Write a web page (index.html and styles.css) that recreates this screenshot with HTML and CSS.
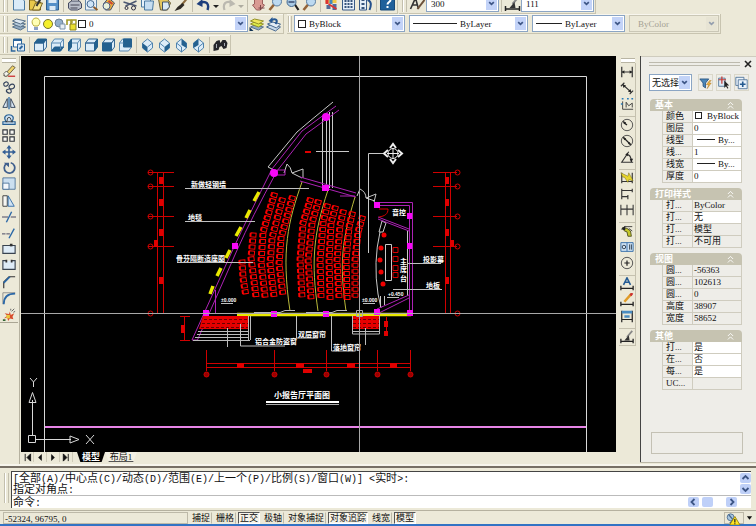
FILE: index.html
```html
<!DOCTYPE html>
<html lang="zh-CN">
<head>
<meta charset="utf-8">
<title>小报告厅平面图</title>
<link rel="stylesheet" href="styles.css">
</head>
<body>
<svg class="sprite" aria-hidden="true">
  <symbol id="chev" viewBox="0 0 10 14"><path d="M2.5 5.5L5 8l2.5-2.5" fill="none" stroke="#3d5585" stroke-width="1.8"/></symbol>
  <symbol id="new" viewBox="0 0 16 16"><path d="M3 2h8l3 3v9H3z" fill="#d9ebf8" stroke="#4b7ba3"/></symbol>
  <symbol id="open" viewBox="0 0 16 16"><path d="M2 4h5l1 2h5v8H2z" fill="#e8c84a" stroke="#7a6420"/><path d="M5 14l3-7h7l-3 7z" fill="#f6e27f" stroke="#7a6420"/><path d="M9 10l4-7" stroke="#333" stroke-width="2"/></symbol>
  <symbol id="save" viewBox="0 0 16 16"><path d="M2 2h12v12H2z" fill="#5590c8" stroke="#2c5c8f"/><path d="M4 2h8v5H4zM5 10h6v4H5z" fill="#dceaf6"/></symbol>
  <symbol id="print" viewBox="0 0 16 16"><path d="M5 6V1h7v5" fill="#fff" stroke="#555"/><path d="M2 7l3-2h8l2 3v4l-4 2H4l-2-2z" fill="#b9bec9" stroke="#444a60"/><path d="M4 9h9M4 12h7" stroke="#445"/></symbol>
  <symbol id="preview" viewBox="0 0 16 16"><path d="M2 1h11v13H2z" fill="#e7f0f8" stroke="#6488a8"/><circle cx="7" cy="8" r="3.5" fill="#cfe5f8" stroke="#466b91"/><path d="M10 11l4 3" stroke="#8e5a28" stroke-width="2"/></symbol>
  <symbol id="publish" viewBox="0 0 16 16"><path d="M3 8l5-6 6 5-4 7H5z" fill="#edb23b" stroke="#45506b"/><circle cx="6" cy="10" r="3.5" fill="#e9efd9" stroke="#485981"/><path d="M8 5l4 3" stroke="#c43" stroke-width="2"/></symbol>
  <symbol id="cut" viewBox="0 0 16 16"><path d="M1 6l13 4M14 5L3 10" stroke="#4c5872" stroke-width="1.4"/><circle cx="11" cy="12" r="2" fill="none" stroke="#334"/><circle cx="4" cy="12" r="1.5" fill="none" stroke="#334"/></symbol>
  <symbol id="copy" viewBox="0 0 16 16"><path d="M2 2h9v9H2z" fill="#e7f2fa" stroke="#4b7ba3"/><path d="M5 5h9l-1 9H5z" fill="#c6def1" stroke="#4b7ba3"/></symbol>
  <symbol id="paste" viewBox="0 0 16 16"><path d="M2 3l7-2 5 6-3 7H4z" fill="#e3c65f" stroke="#6d6037"/><path d="M6 6h6l1 5-3 3H6z" fill="#d9e8f4" stroke="#456"/></symbol>
  <symbol id="brush" viewBox="0 0 16 16"><path d="M14 2L8 9" stroke="#8a6a3c" stroke-width="2"/><path d="M9 7l2 2-4 4-6 2 3-4z" fill="#2e2a24"/></symbol>
  <symbol id="undo" viewBox="0 0 16 16"><path d="M12 14c2-6-1-10-8-7" fill="none" stroke="#1d3e7c" stroke-width="2.4"/><path d="M1 8l6-5v8z" fill="#1d3e7c"/></symbol>
  <symbol id="redo" viewBox="0 0 16 16"><path d="M4 14C2 8 5 4 12 7" fill="none" stroke="#bbb9b0" stroke-width="2.2"/><path d="M15 8L9 3v8z" fill="#bbb9b0"/></symbol>
  <symbol id="tri" viewBox="0 0 8 16"><path d="M1 9h6l-3 3z" fill="#222"/></symbol>
  <symbol id="hand" viewBox="0 0 16 16"><path d="M4 2h8v6l2 1-4 5H6L2 9l2-1z" fill="#d99a93" stroke="#9a5f5c"/><path d="M10 9v5M8 12h6" stroke="#7b4648"/></symbol>
  <symbol id="lens" viewBox="0 0 16 16"><path d="M7 8l-5 6" stroke="#946338" stroke-width="2.6"/><circle cx="9.5" cy="5.5" r="4.5" fill="#bcd9f0" stroke="#597c9f"/></symbol>
  <symbol id="lens2" viewBox="0 0 16 16"><path d="M10 8l4 6" stroke="#222" stroke-width="2.2"/><circle cx="7" cy="6" r="4.5" fill="#a9cbe6" stroke="#456a90"/><path d="M4 6h6" stroke="#346" stroke-width="1.4"/></symbol>
  <symbol id="props" viewBox="0 0 16 16"><path d="M2 1h11v6H2z" fill="#f3c947"/><path d="M2 4h3v4H2z" fill="#d33"/><path d="M6 3h3v5H6z" fill="#48b"/><path d="M3 9h4v4H3zM9 8h4v6H9z" fill="#536a98"/><path d="M5 8l8 5" stroke="#d33" stroke-width="1.6"/></symbol>
  <symbol id="gridic" viewBox="0 0 16 16"><path d="M2 1h12v13H2z" fill="#e4eef8" stroke="#385a86"/><path d="M4 4h2v2H4zM7 4h2v2H7zM10 4h2v2h-2zM4 7h2v2H4zM7 7h2v2H7zM10 7h2v2h-2zM4 10h2v2H4zM7 10h2v2H7zM10 10h2v2h-2z" fill="#36547c"/></symbol>
  <symbol id="palette" viewBox="0 0 16 16"><path d="M2 1h7v13H2z" fill="#e4eef8" stroke="#385a86"/><path d="M4 3h3v2H4zM4 7h3v2H4zM4 11h3v2H4z" fill="#36547c"/><path d="M10 4c4 1 4 5 2 10" stroke="#24508c" fill="none" stroke-width="2"/></symbol>
  <symbol id="helpic" viewBox="0 0 16 16"><path d="M1 0h14v14H1z" fill="#20619b" stroke="#174b7b"/><path d="M5 4c0-4 6-3 6 0 0 2-3 2-3 4.500M8 10v2" fill="none" stroke="#fff" stroke-width="2"/></symbol>
  <symbol id="style" viewBox="0 0 16 16"><path d="M1 13L6 2l3 11M3 9h5" stroke="#333" stroke-width="1.6" fill="none"/><path d="M15 4L8 13" stroke="#6c513a" stroke-width="2"/></symbol>
  <symbol id="layers" viewBox="0 0 16 16"><path d="M2 11l4-2 9 2-5 3z" fill="#8fa9c1" stroke="#587189"/><path d="M2 8l4-2 9 2-5 3z" fill="#b5cadb" stroke="#587189"/><path d="M2 5l4-2 9 2-5 3z" fill="#dde8f1" stroke="#587189"/></symbol>
  <symbol id="layery" viewBox="0 0 16 16"><path d="M2 11l4-2 9 2-5 3z" fill="#8fa9c1" stroke="#587189"/><path d="M2 8l4-2 9 2-5 3z" fill="#ddeb49" stroke="#93902a"/><path d="M2 5l4-2 9 2-5 3z" fill="#f0e75b" stroke="#93902a"/><path d="M1 15v-4l4 4z" fill="#135"/></symbol>
  <symbol id="layerp" viewBox="0 0 16 16"><path d="M1 11l4-2 10 2-5 4z" fill="#c7d9ea" stroke="#48688e"/><path d="M2 8l5-2 8 2-4 4z" fill="#e3edf6" stroke="#48688e"/><path d="M10 8c3-4 0-6-4-4" fill="none" stroke="#275894" stroke-width="2"/><path d="M3 5l4-4v6z" fill="#275894"/></symbol>
  <symbol id="bulb" viewBox="0 0 12 14"><path d="M4 9C0 5 3 1 6 1s6 4 2 8z" fill="#ffffb5" stroke="#b9ad3c"/><path d="M4 10h4v3H4z" fill="#8ba0c4"/></symbol>
  <symbol id="sun" viewBox="0 0 12 14"><circle cx="6" cy="7" r="4.500" fill="#f5ef2c" stroke="#777331"/></symbol>
  <symbol id="vp" viewBox="0 0 12 14"><circle cx="5" cy="6" r="4" fill="#93aeca" stroke="#6b8093"/><path d="M6 7h5v5H6z" fill="#e8eef4" stroke="#7d94ab"/></symbol>
  <symbol id="lock" viewBox="0 0 12 14"><path d="M1 8V3h4v4" fill="none" stroke="#a29a26" stroke-width="1.600"/><path d="M4 7h6v6H4z" fill="#eadf32" stroke="#8d8322"/><path d="M6 6V3h4v4" fill="none" stroke="#a29a26" stroke-width="1.400"/></symbol>
  <symbol id="cube-t" viewBox="0 0 16 16"><path d="M2 6h9v8H2zM11 6l3-4v8l-3 4z" fill="#dcecf8" stroke="#3a6b96"/><path d="M2 6l3-4h9l-3 4z" fill="#24618f" stroke="#24618f"/></symbol>
  <symbol id="cube-b" viewBox="0 0 16 16"><path d="M2 6l3-4h9v8l-3 4H2z" fill="#dcecf8" stroke="#5b8bb3"/><path d="M2 14l3-4h9l-3 4z" fill="#24618f" stroke="#24618f"/><path d="M2 6h9l3-4M11 6v6" fill="none" stroke="#5b8bb3"/></symbol>
  <symbol id="cube-l" viewBox="0 0 16 16"><path d="M2 6l3-4h9v8l-3 4H2zM2 6h9v8M11 6l3-4" fill="#dcecf8" stroke="#5b8bb3"/><path d="M2 6l3-4v8l-3 4z" fill="#24618f" stroke="#24618f"/></symbol>
  <symbol id="cube-r" viewBox="0 0 16 16"><path d="M2 6l3-4h9l-3 4zM2 6h9v8H2z" fill="#dcecf8" stroke="#3a6b96"/><path d="M11 6l3-4v8l-3 4z" fill="#24618f" stroke="#24618f"/></symbol>
  <symbol id="cube-f" viewBox="0 0 16 16"><path d="M2 6l3-4h9l-3 4zM11 6l3-4v8l-3 4z" fill="#dcecf8" stroke="#3a6b96"/><path d="M2 6h9v8H2z" fill="#24618f" stroke="#24618f"/></symbol>
  <symbol id="cube-k" viewBox="0 0 16 16"><path d="M2 6l3-4h9v8l-3 4H2z" fill="#dcecf8" stroke="#5b8bb3"/><path d="M6 2h8v8H6z" fill="#24618f" stroke="#24618f"/><path d="M2 6h4" stroke="#5b8bb3"/></symbol>
  <symbol id="iso-1" viewBox="0 0 16 16"><path d="M8 2l5 4v5l-5 4-5-4V6z" fill="#dcecf8" stroke="#4f83ae"/><path d="M3 6l5 4v5l-5-4z" fill="#24618f"/><path d="M8 10l5-4" stroke="#4f83ae"/></symbol>
  <symbol id="iso-2" viewBox="0 0 16 16"><path d="M8 2l5 4v5l-5 4-5-4V6z" fill="#dcecf8" stroke="#4f83ae"/><path d="M13 6l-5 4v5l5-4z" fill="#24618f"/><path d="M8 10L3 6" stroke="#4f83ae"/></symbol>
  <symbol id="iso-3" viewBox="0 0 16 16"><path d="M8 2l5 4v5l-5 4-5-4V6z" fill="#dcecf8" stroke="#4f83ae"/><path d="M8 2l5 4v5L8 8z" fill="#24618f"/><path d="M3 6l5 4v5" fill="none" stroke="#4f83ae"/></symbol>
  <symbol id="iso-4" viewBox="0 0 16 16"><path d="M8 2l5 4v5l-5 4-5-4V6z" fill="#dcecf8" stroke="#4f83ae"/><path d="M8 2L3 6v5l5-3z" fill="#24618f"/><path d="M13 6l-5 4v5" fill="none" stroke="#4f83ae"/></symbol>
  <symbol id="views" viewBox="0 0 16 16"><path d="M3 2h8v8H3z" fill="#fff" stroke="#2d669c"/><path d="M3 2h8v2H3z" fill="#2d669c"/><path d="M1 9v5h4" fill="none" stroke="#2d669c" stroke-width="1.500"/><path d="M7 7h7v7H7z" fill="#dbe9f5" stroke="#2d669c"/><path d="M9 12l3-3" stroke="#2d669c" stroke-width="2"/></symbol>
  <symbol id="camera" viewBox="0 0 16 16"><path d="M1 8l3-4 3-1 1 3 2-3 3 0 2 3-1 5-3 1-2-3-2 1-1 3-5 1z" fill="#25262b"/><path d="M4 7v4M12 6v3" stroke="#a7acb5"/></symbol>
  <symbol id="erase" viewBox="0 0 16 16"><path d="M2 13L12 2l3 2-9 10z" fill="#f1d56c" stroke="#5f523a"/><path d="M2 11l3-3 3 3-3 3H3z" fill="#f2f2ea" stroke="#555"/><path d="M7 14h8" stroke="#c33" stroke-width="1.500"/></symbol>
  <symbol id="copyo" viewBox="0 0 16 16"><path d="M3 3c4-3 6 3 2 4-3 1-4-3-2-4zM9 6c4-4 8 2 3 4-4 1-5-2-3-4zM6 11c4-3 7 4 2 4-3-1-4-3-2-4z" fill="none" stroke="#33425c" stroke-width="1.300"/></symbol>
  <symbol id="mirror" viewBox="0 0 16 16"><path d="M1 13L6 3v10zM15 13L10 3v10z" fill="#dce9f5" stroke="#273850"/><path d="M8 1v14" stroke="#2b68a7" stroke-width="1.500"/></symbol>
  <symbol id="offset" viewBox="0 0 16 16"><path d="M1 13h14v-3h-4c4-5 1-8-3-8S1 5 5 10H1z" fill="#cfe2f2" stroke="#265f93" stroke-width="1.300"/><path d="M4 10h8c-3-1-1-5-4-5s-1 4-3 5" fill="none" stroke="#333"/></symbol>
  <symbol id="array" viewBox="0 0 16 16"><path d="M1 1h5v5H1zM9 1h5v5H9zM1 9h5v5H1zM9 9h5v5H9z" fill="#f7f7f2" stroke="#30353c" stroke-width="1.300"/></symbol>
  <symbol id="move" viewBox="0 0 16 16"><path d="M8 2v12M2 8h12" stroke="#335f95" stroke-width="1.800"/><path d="M8 0l3 4H5zM8 16l3-4H5zM0 8l4-3v6zM16 8l-4-3v6z" fill="#335f95"/></symbol>
  <symbol id="rotate" viewBox="0 0 16 16"><path d="M5 3a6 6 0 1 0 5-1" fill="none" stroke="#3f5f8d" stroke-width="2"/><path d="M2 2h6v5z" fill="#3f5f8d"/></symbol>
  <symbol id="scale" viewBox="0 0 16 16"><path d="M1 1h14v13H1z" fill="#cbdff0" stroke="#4a7197"/><path d="M1 7h7v7H1z" fill="#f4f8fc" stroke="#4a7197"/></symbol>
  <symbol id="stretch" viewBox="0 0 16 16"><path d="M1 2h5v12H1z" fill="#f6f6f2" stroke="#333"/><path d="M7 2l7 12H7z" fill="#cfe2f2" stroke="#2b68a7"/></symbol>
  <symbol id="trim" viewBox="0 0 16 16"><path d="M0 8h7M10 8h6" stroke="#335"/><path d="M11 2L5 14" stroke="#2b68a7" stroke-width="1.600"/></symbol>
  <symbol id="extend" viewBox="0 0 16 16"><path d="M0 9h10" stroke="#335" stroke-dasharray="4 1"/><path d="M14 3L8 14" stroke="#2b68a7" stroke-width="1.600"/></symbol>
  <symbol id="brk" viewBox="0 0 16 16"><path d="M1 4h14v9H1z" fill="#dfecf7" stroke="#39434f" stroke-width="1.300"/><path d="M9 2h3v3H9z" fill="#333"/></symbol>
  <symbol id="brk2" viewBox="0 0 16 16"><path d="M5 3H1v10h14V3h-4" fill="#dfecf7" stroke="#39434f" stroke-width="1.300"/><path d="M4 2h2v3H4zM10 2h2v3h-2z" fill="#333"/></symbol>
  <symbol id="chamfer" viewBox="0 0 16 16"><path d="M2 15V8l6-6h7" fill="none" stroke="#333" stroke-width="1.300"/><path d="M2 9l7-7" stroke="#2b68a7" stroke-width="2"/></symbol>
  <symbol id="fillet" viewBox="0 0 16 16"><path d="M1 15V2h14" fill="none" stroke="#888"/><path d="M2 15C2 7 7 3 15 3" fill="none" stroke="#2b68a7" stroke-width="2"/></symbol>
  <symbol id="explode" viewBox="0 0 16 16"><path d="M2 13l4-3-3-3 5 1 1-3 1 4 4-2-2 4 1 3-4-1-2 3-1-4z" fill="#d74c2b"/><path d="M5 9h4v4H5z" fill="#e9c83c"/><path d="M11 5l3-3M13 6l2-1M10 4V2" stroke="#555"/><path d="M1 14h3v2H1z" fill="#363"/></symbol>
  <symbol id="d-lin" viewBox="0 0 16 16"><path d="M2 2v12M14 2v12M2 8h12" stroke="#333" stroke-width="1.400"/><path d="M2 8l3-2v4zM14 8l-3-2v4z" fill="#222"/></symbol>
  <symbol id="d-ali" viewBox="0 0 16 16"><path d="M1 6l4-4M11 15l4-4M3 4l10 9" stroke="#333" stroke-width="1.300"/><path d="M3 4l4 1-3 3zM13 13l-4-1 3-3z" fill="#222"/></symbol>
  <symbol id="d-ord" viewBox="0 0 16 16"><path d="M3 5v9M3 14h12M7 12V6l3 4 4-3v5" stroke="#333" fill="none"/><path d="M2 2h2M8 2h2M13 2h2M1 8h2" stroke="#297cba" stroke-width="1.500"/></symbol>
  <symbol id="d-rad" viewBox="0 0 16 16"><circle cx="8" cy="8" r="6.500" fill="none" stroke="#444"/><path d="M8 8L4 5" stroke="#222" stroke-width="1.500"/><path d="M3 3l4 2-2 2z" fill="#222"/></symbol>
  <symbol id="d-dia" viewBox="0 0 16 16"><circle cx="8" cy="8" r="6.500" fill="none" stroke="#444"/><path d="M4 4l8 8" stroke="#222" stroke-width="1.500"/><path d="M3 3l4 2-2 2zM13 13l-4-2 2-2z" fill="#222"/></symbol>
  <symbol id="d-ang" viewBox="0 0 16 16"><path d="M15 14H2L10 2M7 5c4 0 6 4 6 9" fill="none" stroke="#333" stroke-width="1.300"/><path d="M13 14l-2-4h4zM6 5l3-2v4z" fill="#222"/></symbol>
  <symbol id="d-qk" viewBox="0 0 16 16"><path d="M2 2v12M14 2v12M2 12h12" stroke="#333" stroke-width="1.300"/><path d="M1 2l8 4 1-4 5 9-5-1-1 3-4-6-2 0z" fill="#e7d52c" stroke="#5f5714" stroke-width=".500"/></symbol>
  <symbol id="d-base" viewBox="0 0 16 16"><path d="M2 2v12M14 2v4M9 9v5M2 4h12M2 11h7" stroke="#333" stroke-width="1.300"/></symbol>
  <symbol id="d-cont" viewBox="0 0 16 16"><path d="M1 2v12M8 2v12M15 2v12M1 7h14" stroke="#333" stroke-width="1.200"/></symbol>
  <symbol id="d-lead" viewBox="0 0 16 16"><path d="M3 4l5 1 4 3 1 6-4 0-1-5-3-1z" fill="#c3c729" stroke="#4b4c1f"/><path d="M1 6l5-4v5z" fill="#222"/><path d="M5 3h9M10 5l4 3" stroke="#333"/></symbol>
  <symbol id="d-tol" viewBox="0 0 16 16"><path d="M1 3h14v10H1z" fill="#cfe2f2" stroke="#2b68a7"/><path d="M8 3v10" stroke="#2b68a7"/><circle cx="4.500" cy="8" r="2" fill="none" stroke="#234"/><path d="M11 5v6M13 5v6" stroke="#234"/></symbol>
  <symbol id="d-cen" viewBox="0 0 16 16"><circle cx="8" cy="8" r="6.500" fill="none" stroke="#444"/><path d="M8 5v6M5 8h6" stroke="#222" stroke-width="1.400"/></symbol>
  <symbol id="d-txt" viewBox="0 0 16 16"><path d="M4 9l4-8 4 8M6 6h4" fill="none" stroke="#255c94" stroke-width="1.800"/><path d="M1 10v5M15 10v5M1 13h14" stroke="#222" stroke-width="1.500"/></symbol>
  <symbol id="d-ed" viewBox="0 0 16 16"><path d="M13 1L5 10" stroke="#e09c28" stroke-width="2.800"/><path d="M14 0l-2 3" stroke="#c33" stroke-width="2.800"/><path d="M1 10v5M15 10v5M1 13h14" stroke="#222" stroke-width="1.500"/></symbol>
  <symbol id="d-upd" viewBox="0 0 16 16"><path d="M2 2v13M14 2v13M2 12h12" stroke="#222" stroke-width="1.400"/><path d="M2 2h12v3H2zM5 7h6v3H5z" fill="#4a8cc1"/></symbol>
  <symbol id="d-sty" viewBox="0 0 16 16"><path d="M14 1L8 8" stroke="#888" stroke-width="2"/><path d="M10 6l-5 6h6z" fill="#333"/><path d="M1 10v5M15 10v5M1 13h14" stroke="#222" stroke-width="1.500"/></symbol>
  <symbol id="filter" viewBox="0 0 16 16"><path d="M1 3h11L8 8v6l-3-2V8z" fill="#4a86b9" stroke="#254f7c"/><path d="M13 5l-4 5h3l-2 5 5-7h-3l3-3z" fill="#f0b23c" stroke="#9b6614" stroke-width=".500"/></symbol>
  <symbol id="pick" viewBox="0 0 16 16"><path d="M2 2h8v10H2z" fill="#dce9f5" stroke="#456b92"/><path d="M6 0v9M2 4h9" stroke="#c43a34" stroke-width="1.500"/><path d="M9 5v9l2-2 2 3 1-1-2-3h3z" fill="#222"/></symbol>
  <symbol id="plus" viewBox="0 0 16 16"><path d="M1 1h10v10H1z" fill="#eaf2fa" stroke="#456b92"/><path d="M4 4h11v11H4z" fill="#eaf2fa" stroke="#456b92"/><path d="M9.500 6v7M6 9.500h7" stroke="#245a90" stroke-width="2"/></symbol>
  <symbol id="fold" viewBox="0 0 8 8"><path d="M1 4l3-3 3 3M1 8l3-3 3 3" fill="none" stroke="#fff"/></symbol>
</svg>

<div class="app">
  <header class="bars">
    <div class="bar bar-cut">
      <div class="tools">
        <i class="grip"></i>
        <button aria-label="新建"><svg><use href="#new"/></svg></button><button aria-label="打开"><svg><use href="#open"/></svg></button><button aria-label="保存"><svg><use href="#save"/></svg></button>
        <i class="sep"></i>
        <button aria-label="打印"><svg><use href="#print"/></svg></button><button aria-label="预览"><svg><use href="#preview"/></svg></button><button aria-label="发布"><svg><use href="#publish"/></svg></button>
        <i class="sep"></i>
        <button aria-label="剪切"><svg><use href="#cut"/></svg></button><button aria-label="复制"><svg><use href="#copy"/></svg></button><button aria-label="粘贴"><svg><use href="#paste"/></svg></button><button aria-label="特性匹配"><svg><use href="#brush"/></svg></button>
        <i class="sep"></i>
        <button aria-label="放弃"><svg><use href="#undo"/></svg></button><button class="narrow" aria-label="放弃列表"><svg><use href="#tri"/></svg></button><button aria-label="重做"><svg><use href="#redo"/></svg></button><button class="narrow faint" aria-label="重做列表"><svg><use href="#tri"/></svg></button>
        <i class="sep"></i>
        <button aria-label="平移"><svg><use href="#hand"/></svg></button><button aria-label="实时缩放"><svg><use href="#lens"/></svg></button><button aria-label="窗口缩放"><svg><use href="#lens2"/></svg></button><button aria-label="上一个缩放"><svg><use href="#lens"/></svg></button>
        <i class="sep"></i>
        <button aria-label="特性"><svg><use href="#props"/></svg></button><button aria-label="设计中心"><svg><use href="#gridic"/></svg></button><button aria-label="工具选项板"><svg><use href="#palette"/></svg></button>
        <i class="sep"></i>
        <button aria-label="帮助"><svg><use href="#helpic"/></svg></button>
      </div>
      <div class="tools">
        <i class="grip"></i>
        <button aria-label="文字样式"><svg><use href="#style"/></svg></button>
        <span class="combo w-text"><select aria-label="文字样式名"><option>300</option></select><svg class="arrow"><use href="#chev"/></svg></span>
        <i class="sep"></i>
        <button aria-label="标注样式"><svg><use href="#d-sty"/></svg></button>
        <span class="combo w-text"><select aria-label="标注样式名"><option>111</option></select><svg class="arrow"><use href="#chev"/></svg></span>
      </div>
    </div>
    <div class="bar">
      <div class="tools">
        <i class="grip"></i>
        <button aria-label="图层特性"><svg><use href="#layers"/></svg></button>
        <span class="combo w-layer"><svg class="mini"><use href="#bulb"/></svg><svg class="mini"><use href="#sun"/></svg><svg class="mini"><use href="#vp"/></svg><svg class="mini"><use href="#lock"/></svg><i class="swatch"></i><select aria-label="图层"><option>0</option></select><svg class="arrow"><use href="#chev"/></svg></span>
        <button aria-label="置为当前图层"><svg><use href="#layery"/></svg></button><button aria-label="上一个图层"><svg><use href="#layerp"/></svg></button>
      </div>
      <div class="tools roomy">
        <i class="grip"></i>
        <span class="combo w-color"><i class="swatch"></i><select aria-label="颜色"><option>ByBlock</option></select><svg class="arrow"><use href="#chev"/></svg></span>
        <span class="combo w-ltype"><i class="line"></i><select aria-label="线型"><option>ByLayer</option></select><svg class="arrow"><use href="#chev"/></svg></span>
        <span class="combo w-lw"><i class="line short"></i><select aria-label="线宽"><option>ByLayer</option></select><svg class="arrow"><use href="#chev"/></svg></span>
        <span class="combo off w-plot"><select aria-label="打印样式" disabled><option>ByColor</option></select><svg class="arrow"><use href="#chev"/></svg></span>
      </div>
    </div>
    <div class="bar">
      <div class="tools">
        <i class="grip"></i>
        <button aria-label="命名视图"><svg><use href="#views"/></svg></button>
        <i class="sep"></i>
        <button aria-label="俯视"><svg><use href="#cube-t"/></svg></button><button aria-label="仰视"><svg><use href="#cube-b"/></svg></button><button aria-label="左视"><svg><use href="#cube-l"/></svg></button><button aria-label="右视"><svg><use href="#cube-r"/></svg></button><button aria-label="主视"><svg><use href="#cube-f"/></svg></button><button aria-label="后视"><svg><use href="#cube-k"/></svg></button>
        <i class="sep"></i>
        <button aria-label="西南等轴测"><svg><use href="#iso-1"/></svg></button><button aria-label="东南等轴测"><svg><use href="#iso-2"/></svg></button><button aria-label="东北等轴测"><svg><use href="#iso-3"/></svg></button><button aria-label="西北等轴测"><svg><use href="#iso-4"/></svg></button>
        <i class="sep"></i>
        <button aria-label="相机"><svg><use href="#camera"/></svg></button>
      </div>
    </div>
  </header>

  <main class="work">
    <aside class="side">
      <i class="vgrip"></i>
      <div class="modify">
        <button aria-label="删除"><svg><use href="#erase"/></svg></button><button aria-label="复制对象"><svg><use href="#copyo"/></svg></button><button aria-label="镜像"><svg><use href="#mirror"/></svg></button><button aria-label="偏移"><svg><use href="#offset"/></svg></button><button aria-label="阵列"><svg><use href="#array"/></svg></button><button aria-label="移动"><svg><use href="#move"/></svg></button><button aria-label="旋转"><svg><use href="#rotate"/></svg></button><button aria-label="缩放"><svg><use href="#scale"/></svg></button><button aria-label="拉伸"><svg><use href="#stretch"/></svg></button><button aria-label="修剪"><svg><use href="#trim"/></svg></button><button aria-label="延伸"><svg><use href="#extend"/></svg></button><button aria-label="打断于点"><svg><use href="#brk"/></svg></button><button aria-label="打断"><svg><use href="#brk2"/></svg></button><button aria-label="倒角"><svg><use href="#chamfer"/></svg></button><button aria-label="圆角"><svg><use href="#fillet"/></svg></button><button aria-label="分解"><svg><use href="#explode"/></svg></button>
      </div>
    </aside>

    <section class="view">
      <div class="canvas">
        <svg class="plan" viewBox="21 56 595 396" preserveAspectRatio="xMinYMin meet">
          <g fill="none" stroke="#d8d8d8">
            <path d="M44.500 452V76.500H586.500V452"/>
            <path d="M32.500 435V400M36 439.500H71M28.500 435.500h7v7h-7zM29 402.500h7l-3.500-10zM70 436v7l9-3.500z"/>
            <path d="M30 378l3.500 4 3.500-4M33.500 382v5M86 435l8 9M94 435l-8 9"/>
          </g>
          <path d="M45 427H586" stroke="#e684e6" stroke-width="2"/>

          <g class="dims" fill="none" stroke="#d00000">
            <path d="M157.500 172V314M163.500 172V314M445.500 172V314M450.500 172V314"/>
            <path d="M148 172.500h26M148 186.500h26M148 216.500h26M148 246.500h26M148 313.500h26M433 172.500h24M433 186.500h24M433 216.500h24M433 246.500h24M433 313.500h24"/>
            <path d="M206 363.500H411M206 367.500H411M206.500 350v21M274.500 350v21M326.500 350v21M377.500 350v21M410.500 350v21"/>
            <path d="M184.500 316v24M180 316.500h10M180 340.500h10M386.500 317v17"/>
            <g><circle cx="150.500" cy="172.500" r="2.500"/><circle cx="150.500" cy="186.500" r="2.500"/><circle cx="150.500" cy="216.500" r="2.500"/><circle cx="150.500" cy="246.500" r="2.500"/><circle cx="150.500" cy="313.500" r="2.500"/><circle cx="457.500" cy="172.500" r="2.500"/><circle cx="457.500" cy="186.500" r="2.500"/><circle cx="457.500" cy="216.500" r="2.500"/><circle cx="457.500" cy="246.500" r="2.500"/><circle cx="457.500" cy="313.500" r="2.500"/></g>
            <g fill="#900"><circle cx="206.500" cy="374.500" r="2.500"/><circle cx="274.500" cy="374.500" r="2.500"/><circle cx="326.500" cy="374.500" r="2.500"/><circle cx="377.500" cy="374.500" r="2.500"/><circle cx="410.500" cy="374.500" r="2.500"/></g>
          </g>
          <path fill="#e00000" d="M159 177h4v7h-4zM159 199h4v7h-4zM159 229h4v7h-4zM154 240h4v7h-4zM159 277h4v7h-4zM445 177h4v7h-4zM445 199h4v7h-4zM445 229h4v7h-4zM450 240h4v7h-4zM445 277h4v7h-4zM181 325h4v8h-4zM384 321h4v6h-4zM384 331h4v5h-4zM237 363h7v5h-7zM296 363h8v5h-8zM347 363h8v5h-8zM390 363h7v5h-7zM303 369h9v4h-9zM305 151h6v2h-6z"/>

          <g fill="none" stroke="#c8c8c8">
            <path d="M268 167L297 132 310 121 333 102M268 167l6 3"/>
            <path d="M322.500 118V188M326.500 118V188M329.500 112V188M332.500 112V188M316 151.500h33"/>
            <path d="M384 153.500H368.500V253M407.500 231V296M382 221l4 2-3 9h-4zM380 232Q373 262 378 294l3 14M385.500 244.500h6v36h-6zM380.500 296v11M384.500 296v9"/>
            <path d="M284 173l3-9q4 3 5 9M303 178V169l-11 4 10 5M357 196l3-7q6 3 6 9M374 202l2-8-10 4 9 3"/>
          </g>
          <g fill="none" stroke="#ad22b5">
            <path d="M336 106L302 131 272 169Q247 219 234 247L206 309 192 340M339 110L306 134 277 171Q251 219 238 248L208 316 197 341M192 340h5"/>
            <path d="M277 170h8v5h-8zM300 177L356 193M300 181L356 197M340 196h15"/>
            <path d="M377 202.500H412.500V313M377 205.500H409.500V313M378 217L409 229M378 219L409 231M377 309L409 295M379 313L409 298M215.500 290V313"/>
          </g>
          <g stroke="#e8e800" stroke-width="3.500" fill="none">
            <path d="M259 192l-5 9M250 210l-4 8M241 227l-5 9M230 250l-4 8M221 268l-4 8M213 286l-3 8"/>
            <path d="M237 314.500H411"/>
          </g>
          <g stroke="#b9b93a" fill="none">
            <path d="M302 182C288 222 281 250 290 311M328 190C313 235 311 262 318 311M355 197C342 240 339 262 346 311"/>
          </g>
          <g id="seats" fill="none" stroke="#ff0000"></g>
          <g fill="#f00000"><circle cx="384" cy="235" r="2.500"/><circle cx="381" cy="248" r="2.500"/><circle cx="380" cy="260" r="2.500"/><circle cx="381" cy="272" r="2.500"/><circle cx="383" cy="284" r="2.500"/></g>
          <path d="M393 247.500h5v5h-5zM393 256.500h5v5h-5zM393 265.500h5v5h-5zM393 272.500h5v5h-5zM379 209h9c0 5-3 7-9 8" fill="none" stroke="#d80000"/>
          <path d="M203 316H248V329H199zM353 316H379V329H353z" fill="#e60000"/>
          <path d="M204 319.500h44M202 323.500h46M201 327.500h47M353 319.500h26M353 323.500h26M353 327.500h26" stroke="#600" stroke-dasharray="3 2"/>
          <path d="M198 331.500h50M197 334.500h51M195 337.500h53M193 340.500h57M248.500 316v24M250.500 316v24M353 331.500h26M352.500 316v18h27v-18M227.500 328v19M365.500 328v17M238 313.500h24M254 312.500h26l5-2h10M306 312.500h26l5-2h10" fill="none" stroke="#bbb"/>
          <g fill="#f808f8"><circle cx="326" cy="117" r="4"/><circle cx="274" cy="173" r="4"/><path d="M322 185h7v6h-7zM374 202h6v6h-6zM407 213h5v6h-5zM407 243h5v6h-5zM232 243h6v6h-6zM203 310h6v6h-6zM271 311h6v6h-6zM323 311h6v6h-6zM374 309h6v6h-6zM407 310h6v6h-6z"/></g>
          <g fill="none" stroke="#eee">
            <path d="M390 148l3-4 3 4M390 159l3 4 3-4M388 150l-4 3.500 4 3.500M398 150l4 3.500-4 3.500" stroke-width="2"/><path d="M387 153.500h12M393 148v11"/><circle cx="393" cy="153.500" r="5"/>
          </g>
          <g fill="none" stroke="#c0c0c0">
            <path d="M185 188.500H309M185 221.500H255M177 262.500H253M407 263.500h34M393 289.500h49M240.500 324v22H285M296.500 316v22h21M331.500 316v35h24M221 303.500h12M363 303.500h12M387 297.500h12"/>
          </g>
          <g class="note">
            <text x="191" y="187">新做轻钢墙</text><text x="188" y="220">地毯</text><text x="176" y="261">骨芬隔断造座圈</text>
            <text x="392" y="215">音控</text><text x="423" y="262">投影幕</text><text x="426" y="288">地板</text>
            <text x="255" y="344">铝合金防盗窗</text><text x="298" y="337">双层窗帘</text><text x="333" y="350">落地窗帘</text>
            <text x="400" y="264">主</text><text x="400" y="272">席</text><text x="400" y="281">台</text>
          </g>
          <g class="level">
            <text x="221" y="302">±0.000</text><text x="362" y="302">±0.000</text><text x="388" y="296">+0.450</text>
          </g>
          <text class="caption" x="274" y="398">小报告厅平面图</text>
          <path d="M266 402h73" stroke="#fff" stroke-width="2"/><path d="M266 404.500h73" stroke="#aaa"/>
          <path d="M359.500 56V452M21 313.500H616" stroke="#a8a8a8"/>
          <path d="M356.500 310.500h6v6h-6z" fill="none" stroke="#a8a8a8"/>
        </svg>
      </div>
      <nav class="tabs">
        <button aria-label="首个"><svg viewBox="0 0 12 10"><path d="M4 1v8M10 1L6 5l4 4z" stroke="#111" fill="#111"/></svg></button>
        <button aria-label="前一个"><svg viewBox="0 0 12 10"><path d="M8 1L4 5l4 4z" fill="#111"/></svg></button>
        <button aria-label="后一个"><svg viewBox="0 0 12 10"><path d="M4 1l4 4-4 4z" fill="#111"/></svg></button>
        <button aria-label="末个"><svg viewBox="0 0 12 10"><path d="M8.500 1v8M3 1l4 4-4 4z" stroke="#111" fill="#111"/></svg></button>
        <button class="tab on">模型</button><button class="tab">布局1</button>
      </nav>
    </section>

    <aside class="side right">
      <i class="vgrip"></i>
      <div class="dimbar">
        <div><button aria-label="线性标注"><svg><use href="#d-lin"/></svg></button><button aria-label="对齐标注"><svg><use href="#d-ali"/></svg></button><button aria-label="坐标标注"><svg><use href="#d-ord"/></svg></button></div>
        <div><button aria-label="半径标注"><svg><use href="#d-rad"/></svg></button><button aria-label="直径标注"><svg><use href="#d-dia"/></svg></button><button aria-label="角度标注"><svg><use href="#d-ang"/></svg></button></div>
        <div><button aria-label="快速标注"><svg><use href="#d-qk"/></svg></button><button aria-label="基线标注"><svg><use href="#d-base"/></svg></button><button aria-label="连续标注"><svg><use href="#d-cont"/></svg></button></div>
        <div><button aria-label="快速引线"><svg><use href="#d-lead"/></svg></button><button aria-label="公差"><svg><use href="#d-tol"/></svg></button><button aria-label="圆心标记"><svg><use href="#d-cen"/></svg></button></div>
        <div><button aria-label="编辑标注"><svg><use href="#d-txt"/></svg></button><button aria-label="编辑标注文字"><svg><use href="#d-ed"/></svg></button><button aria-label="标注更新"><svg><use href="#d-upd"/></svg></button></div>
        <div><button aria-label="标注样式管理"><svg><use href="#d-sty"/></svg></button></div>
      </div>
    </aside>

    <aside class="props">
      <div class="titlebar"><i></i><button aria-label="关闭"><svg viewBox="0 0 8 8"><path d="M1 1l6 6M7 1L1 7" stroke="#222" stroke-width="1.600"/></svg></button></div>
      <div class="picker">
        <span class="combo"><select aria-label="选择"><option>无选择</option></select><svg class="arrow"><use href="#chev"/></svg></span>
        <button aria-label="快速选择"><svg><use href="#filter"/></svg></button><button aria-label="选择对象"><svg><use href="#pick"/></svg></button><button aria-label="切换加选"><svg><use href="#plus"/></svg></button>
      </div>
      <section class="group"><h2>基本<svg><use href="#fold"/></svg></h2>
        <table>
          <tr><th>颜色</th><td><i class="swatch"></i>ByBlock</td></tr>
          <tr><th>图层</th><td>0</td></tr>
          <tr><th>线型</th><td><i class="line"></i>By...</td></tr>
          <tr><th>线...</th><td>1</td></tr>
          <tr><th>线宽</th><td><i class="line"></i>By...</td></tr>
          <tr><th>厚度</th><td>0</td></tr>
        </table></section>
      <section class="group"><h2>打印样式<svg><use href="#fold"/></svg></h2>
        <table>
          <tr><th>打...</th><td class="ro">ByColor</td></tr>
          <tr><th>打...</th><td>无</td></tr>
          <tr><th>打...</th><td class="ro">模型</td></tr>
          <tr><th>打...</th><td class="ro">不可用</td></tr>
        </table></section>
      <section class="group"><h2>视图<svg><use href="#fold"/></svg></h2>
        <table>
          <tr><th>圆...</th><td class="ro">-56363</td></tr>
          <tr><th>圆...</th><td class="ro">102613</td></tr>
          <tr><th>圆...</th><td class="ro">0</td></tr>
          <tr><th>高度</th><td class="ro">38907</td></tr>
          <tr><th>宽度</th><td class="ro">58652</td></tr>
        </table></section>
      <section class="group"><h2>其他<svg><use href="#fold"/></svg></h2>
        <table>
          <tr><th>打...</th><td>是</td></tr>
          <tr><th>在...</th><td>否</td></tr>
          <tr><th>每...</th><td>是</td></tr>
          <tr><th>UC...</th><td class="ro"></td></tr>
        </table></section>
      <div class="hint"></div>
    </aside>
  </main>

  <section class="command">
    <i class="grip"></i>
    <div class="console">
      <div class="history">
        <div class="log">
          <p>[<b>全部</b>(A)/<b>中心点</b>(C)/<b>动态</b>(D)/<b>范围</b>(E)/<b>上一个</b>(P)/<b>比例</b>(S)/<b>窗口</b>(W)] &lt;<b>实时</b>&gt;:</p>
          <p><b>指定对角点</b>:</p>
        </div>
        <div class="vscroll">
          <button aria-label="向上"><svg viewBox="0 0 10 10"><path d="M2 6l3-3 3 3" fill="none" stroke="#3d5585" stroke-width="1.800"/></svg></button>
          <button aria-label="向下"><svg viewBox="0 0 10 10"><path d="M2 4l3 3 3-3" fill="none" stroke="#3d5585" stroke-width="1.800"/></svg></button>
        </div>
      </div>
      <div class="prompt">
        <label for="cmd"><b>命令</b>:</label><input id="cmd" type="text">
        <div class="hscroll">
          <button aria-label="向左"><svg viewBox="0 0 10 10"><path d="M6 2L3 5l3 3" fill="none" stroke="#3d5585" stroke-width="1.800"/></svg></button>
          <i></i>
          <button aria-label="向右"><svg viewBox="0 0 10 10"><path d="M4 2l3 3-3 3" fill="none" stroke="#3d5585" stroke-width="1.800"/></svg></button>
        </div>
      </div>
    </div>
  </section>

  <footer class="status">
    <output>-52324, 96795, 0</output>
    <button>捕捉</button><button>栅格</button><button class="on">正交</button><button>极轴</button><button>对象捕捉</button><button class="on">对象追踪</button><button>线宽</button><button class="on">模型</button>
    <span class="tray"><svg viewBox="0 0 20 14"><circle cx="6" cy="5" r="4" fill="#a9c6df" stroke="#47698d"/><path d="M4 2l5 6-4 4" fill="none" stroke="#47698d" stroke-width="1.500"/><path d="M11 4l6 10H5z" fill="#ffe423" stroke="#937f0c"/><path d="M11 7v4M11 12v1" stroke="#222" stroke-width="1.400"/></svg></span>
    <svg class="more" viewBox="0 0 8 8"><path d="M1 2h6L4 6z" fill="#111"/></svg>
  </footer>
</div>
<script src="script.js"></script>
</body>
</html>
```

FILE: styles.css
```css
* { box-sizing: border-box; }
body {
  margin: 0;
  font: 9px/12px "Liberation Serif", "Noto Sans CJK SC", sans-serif;
  color: #111;
  background: #ece9d8;
}
button, select, input { font: inherit; color: inherit; padding: 0; margin: 0; border: 0; background: none; }
i, b { font-style: normal; font-weight: normal; }
.sprite { position: absolute; width: 0; height: 0; }
.app { display: flex; flex-direction: column; height: 100vh; min-height: 500px; overflow: hidden; }

/* toolbars */
.bars { flex: none; height: 56px; }
.bar { display: flex; height: 21px; }
.bar-cut { height: 14px; align-items: flex-end; overflow: hidden; }
.tools {
  display: flex;
  align-items: center;
  height: 20px;
  padding-right: 1px;
  border: solid #c8c4b0;
  border-width: 0 1px 1px 0;
  box-shadow: inset 0 1px #f8f6ee;
}
.tools + .tools { margin-left: 3px; }
.bar-cut .tools + .tools { margin-left: 1px; }
.tools button { width: 17px; height: 17px; }
.tools button.narrow { width: 8px; }
.tools button.faint { opacity: .3; }
.tools svg { display: block; width: 100%; height: 16px; }
.grip { flex: none; width: 5px; height: 16px; margin: 0 2px 0 3px; border: solid #c3bfad; border-width: 0 1px; box-shadow: inset 1px 0 #fff; }
.roomy .grip { width: 4px; margin: 0 2px 0 1px; }
.sep { flex: none; width: 1px; height: 16px; margin: 0 2px; background: #c3bfad; }
.combo {
  display: flex;
  align-items: center;
  height: 17px;
  padding: 1px;
  background: #fff;
  border: 1px solid #8ba5c4;
}
.combo select { flex: 1; width: 0; min-width: 0; height: 14px; padding-left: 3px; appearance: none; outline: 0; }
.combo .arrow { flex: none; width: 11px; height: 13px; background: #c3d3f8; }
.combo .mini { flex: none; width: 12px; height: 14px; }
.w-layer { width: 221px; padding-left: 2px; }
.w-text { width: 73px; }
.w-color { width: 111px; padding-left: 3px; }
.w-ltype { width: 119px; padding-left: 3px; }
.w-lw { width: 93px; padding-left: 3px; }
.w-plot { width: 90px; padding-left: 5px; }
.roomy .combo + .combo { margin-left: 4px; }
.swatch { flex: none; display: inline-block; width: 8px; height: 8px; border: 1px solid #222; background: #fff; }
.line { flex: none; display: inline-block; width: 44px; height: 1px; background: #222; }
.line.short { width: 26px; }
.combo.off { background: #ece9d8; border-color: #cac7b6; color: #a5a294; }
.combo.off select { opacity: 1; color: inherit; }
.combo.off .arrow { background: #e4e1d1; opacity: .5; }

/* work area */
.work { flex: 1; display: flex; min-height: 0; }
.side { flex: none; width: 20px; border-right: 1px solid #b5b19f; }
.side button { display: block; width: 100%; }
.side svg { display: block; width: 14px; height: 14px; margin: 0 auto; }
.vgrip { display: block; height: 5px; margin: 2px 3px 0 2px; border: solid #b9b5a3; border-width: 1px 0; background: #fff; }
.modify { display: grid; grid-auto-rows: 1fr; align-items: center; height: 260px; width: 18px; border-bottom: 1px solid #aaa694; }
.view { flex: 1; display: flex; flex-direction: column; min-width: 0; padding-left: 1px; }
.canvas { flex: 1; min-height: 0; background: #000; }
.plan { display: block; width: 100%; height: 100%; }
.note { fill: #fff; font: bold 7px/1 "Noto Sans CJK SC", sans-serif; }
.level { fill: #fff; font: bold 5px/1 "Liberation Sans", sans-serif; }
.caption { fill: #fff; font: bold 8px/1 "Noto Sans CJK SC", sans-serif; }
.tabs { flex: none; display: flex; height: 14px; padding-bottom: 4px; }
.tabs button { width: 13px; height: 10px; border-right: 1px solid #cfcbb9; }
.tabs svg { display: block; width: 12px; height: 9px; }
.tabs .tab { width: 32px; border: 0; clip-path: polygon(0 0, 100% 0, 88% 100%, 12% 100%); line-height: 10px; background: #f2f0e4; text-align: center; }
.tabs .tab.on { width: 28px; margin-left: 4px; background: #000; color: #fff; font-weight: bold; }
.tabs .tab:last-child { border-bottom: 1px solid #555; }
.side.right { width: 24px; padding: 0 2px 0 3px; border: 0; }
.dimbar { display: flex; flex-direction: column; gap: 4px; width: 17px; padding-top: 1px; border: solid #c5c1af; border-width: 0 1px 1px 0; }
.dimbar div + div { border-top: 1px solid #c5c1af; }
.dimbar button { height: 16px; }

/* property palette */
.props {
  flex: none;
  display: flex;
  flex-direction: column;
  width: 116px;
  margin-bottom: 4px;
  padding: 3px 4px 8px 8px;
  background: #eeede8;
  border: solid #444;
  border-width: 0 0 0 1px;
  box-shadow: inset 0 1px #cfccbe, 0 1px #bbb7a6;
}
.titlebar { display: flex; align-items: center; gap: 4px; height: 9px; }
.titlebar i { flex: 1; height: 4px; border: solid #bdbaae; border-width: 1px 0; }
.titlebar button { width: 8px; height: 8px; }
.titlebar svg { display: block; }
.picker { display: flex; align-items: center; gap: 3px; padding: 6px 0 8px; }
.picker .combo { width: 43px; height: 17px; margin-right: 3px; }
.picker .combo select { padding-left: 1px; }
.picker button { width: 15px; height: 17px; border: 1px solid #dad7c9; }
.picker button svg { display: block; width: 13px; height: 14px; }
.group { margin: 0 10px 5px 1px; }
.group h2 {
  display: flex;
  align-items: center;
  justify-content: space-between;
  margin: 0;
  padding: 0 8px 0 5px;
  height: 12px;
  font: bold 9px/12px "Noto Sans CJK SC", sans-serif;
  color: #fff;
  background: #c6c3b1;
  border-radius: 4px 4px 0 0;
}
.group h2 svg { width: 7px; height: 8px; }
.group table { width: 80px; margin-left: auto; border-collapse: separate; border-spacing: 0; table-layout: fixed; border-left: 1px solid #cfccbf; }
.group th, .group td { height: 12px; padding: 0 0 0 1px; line-height: 11px; border: solid #cfccbf; border-width: 0 1px 1px 0; white-space: nowrap; overflow: hidden; }
.group th { width: 30px; padding-left: 3px; text-align: left; font-weight: normal; background: #eeede8; }
.group td { background: #fff; }
.group td.ro { background: #eeede8; }
.group td .swatch { width: 7px; height: 7px; margin: 0 5px 0 1px; }
.group td .line { width: 18px; margin: 0 3px 3px 3px; }
.hint { height: 22px; margin: auto 9px 0 2px; border: 1px solid #c4c1b4; }

/* command window */
.command { flex: none; display: flex; height: 44px; padding: 3px 5px 2px 0; border-top: 2px solid #766f64; box-shadow: 0 -2px #f7f5ec; }
.command .grip { height: 30px; margin: 2px 2px 0 4px; }
.command b { font: 11px/1 "Noto Sans CJK SC", sans-serif; }
.console { flex: 1; min-width: 0; background: #fff; border: solid #444; border-width: 1px 0 0 1px; font: 10px/11px "Liberation Mono", monospace; }
.history { display: flex; height: 24px; border-bottom: 1px solid #bbb; }
.log { flex: 1; min-width: 0; padding-left: 1px; }
.log p { margin: 0; height: 11px; white-space: nowrap; }
.prompt { display: flex; align-items: center; height: 12px; padding-left: 1px; }
.prompt input { flex: 1; min-width: 0; height: 11px; outline: 0; }
.vscroll { display: flex; flex-direction: column; gap: 1px; width: 11px; padding-top: 1px; }
.hscroll { display: flex; align-items: center; gap: 3px; margin-right: 14px; }
.vscroll button, .hscroll button, .hscroll i { width: 11px; height: 10px; border-radius: 2px; background: #bfd0f8; }
.hscroll button:last-child { margin-left: 10px; }
.vscroll svg, .hscroll svg { display: block; width: 11px; height: 10px; }

/* status bar */
.status { flex: none; display: flex; align-items: stretch; gap: 2px; height: 16px; padding: 1px 3px 0; border-top: 1px solid #b5b19f; border-bottom: 2px solid #3273c4; }
.status output { width: 185px; padding-left: 1px; border: 1px solid #bdb9a8; }
.status button { padding: 0 1px; line-height: 11px; border: 1px solid transparent; border-right-color: #bdb9a8; }
.status button.on { border-color: #555 #fff #fff #555; background: #f6f4ea; }
.tray { margin-left: auto; width: 20px; border: 1px solid #bdb9a8; }
.tray svg { display: block; width: 18px; height: 12px; }
.more { width: 7px; height: 8px; align-self: center; }
```

FILE: script.js
```js
// Seating rows: each row is a curve through a few plan points.
const rows = [
  [[242, 262], [243, 278], [246, 297]],
  [[253, 235], [251, 258], [256, 297]],
  [[274, 195], [263, 232], [261, 262], [265, 297]],
  [[282, 200], [272, 238], [270, 264], [274, 297]],
  [[292, 198], [281, 238], [279, 264], [283, 296]],
  [[310, 200], [303, 223], [300, 260], [302, 299]],
  [[318, 202], [312, 223], [308, 260], [311, 299]],
  [[327, 206], [323, 223], [320, 260], [321, 299]],
  [[335, 208], [331, 223], [329, 260], [330, 299]],
  [[343, 212], [340, 225], [337, 260], [339, 298]],
  [[352, 214], [349, 227], [346, 260], [347, 298]],
  [[362, 218], [358, 232], [355, 260], [355, 298]]
];
const pitch = 6;
const group = document.getElementById('seats');

rows.forEach(points => {
  let carry = 0;
  for (let i = 0; i < points.length - 1; i++) {
    const [x1, y1] = points[i];
    const [x2, y2] = points[i + 1];
    const length = Math.hypot(x2 - x1, y2 - y1);
    const angle = Math.atan2(y2 - y1, x2 - x1) * 180 / Math.PI - 90;
    let d = carry;
    for (; d < length; d += pitch) {
      const seat = document.createElementNS('http://www.w3.org/2000/svg', 'path');
      seat.setAttribute('d', 'M-2 -2h5v4h-5zM-3 -2v4');
      seat.setAttribute('transform',
        `translate(${x1 + (x2 - x1) * d / length} ${y1 + (y2 - y1) * d / length}) rotate(${angle})`);
      group.appendChild(seat);
    }
    carry = d - length;
  }
});
```
